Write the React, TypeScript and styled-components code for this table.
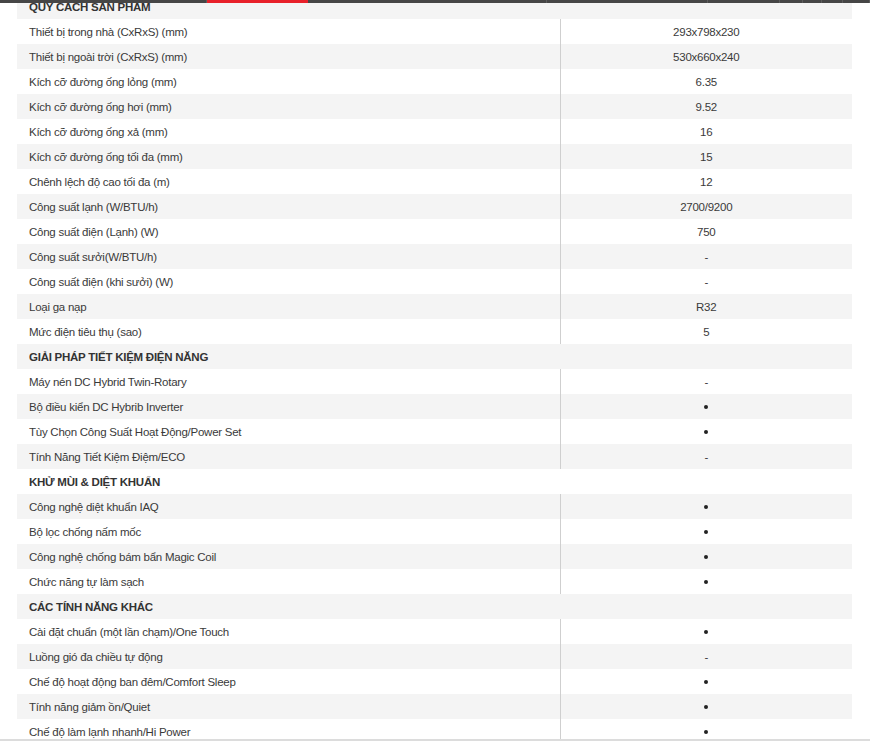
import React from 'react'
import styled, { createGlobalStyle } from 'styled-components'

const GlobalStyle = createGlobalStyle`
  html, body {
    margin: 0;
    padding: 0;
    background: #fff;
  }
  body {
    font-family: 'Liberation Sans', Arial, sans-serif;
    font-size: 11.5px;
    letter-spacing: -0.25px;
    color: #333;
  }
`

const TopNav = styled.div`
  position: fixed;
  top: 0;
  left: 0;
  right: 0;
  height: 3px;
  display: flex;
  background: #464646;
  z-index: 10;
`

const NavTab = styled.div<{ $w: number; $active?: boolean }>`
  width: ${(p) => p.$w}px;
  flex-shrink: 0;
  background: ${(p) => (p.$active ? '#e8202a' : 'transparent')};
  border-right: 1px solid ${(p) => (p.$active ? '#e8202a' : '#5c5c5c')};
  box-sizing: border-box;
`

const BottomEdge = styled.div`
  position: fixed;
  left: 0;
  right: 0;
  bottom: 0;
  height: 2px;
  background: #dcdcdc;
  z-index: 10;
`

const Page = styled.div`
  padding: 0 18px 0 17px;
  margin-top: -6px;
`

const SpecTable = styled.table`
  width: 100%;
  border-collapse: collapse;
  table-layout: fixed;

  tbody tr:nth-child(odd) {
    background: #f4f4f4;
  }
`

const LabelCol = styled.col`
  width: 543px;
`

const Row = styled.tr`
  height: 25px;
`

const HeadCell = styled.td`
  padding: 0 12px;
  font-weight: bold;
  text-transform: uppercase;
  color: #333;
`

const LabelCell = styled.td`
  padding: 0 12px;
  color: #3a3a3a;
  white-space: nowrap;
`

const ValueCell = styled.td`
  border-left: 1px solid #cfcfcf;
  text-align: center;
  color: #3a3a3a;
`

const Dot = styled.span`
  display: inline-block;
  width: 4px;
  height: 4px;
  border-radius: 50%;
  background: #222;
  vertical-align: middle;
`

type Spec = { head: string } | { label: string; value: string }

const specs: Spec[] = [
  { head: 'Quy cách sản phẩm' },
  { label: 'Thiết bị trong nhà (CxRxS) (mm)', value: '293x798x230' },
  { label: 'Thiết bị ngoài trời (CxRxS) (mm)', value: '530x660x240' },
  { label: 'Kích cỡ đường ống lỏng (mm)', value: '6.35' },
  { label: 'Kích cỡ đường ống hơi (mm)', value: '9.52' },
  { label: 'Kích cỡ đường ống xả (mm)', value: '16' },
  { label: 'Kích cỡ đường ống tối đa (mm)', value: '15' },
  { label: 'Chênh lệch độ cao tối đa (m)', value: '12' },
  { label: 'Công suất lạnh (W/BTU/h)', value: '2700/9200' },
  { label: 'Công suất điện (Lạnh) (W)', value: '750' },
  { label: 'Công suất sưởi(W/BTU/h)', value: '-' },
  { label: 'Công suất điện (khi sưởi) (W)', value: '-' },
  { label: 'Loại ga nạp', value: 'R32' },
  { label: 'Mức điện tiêu thụ (sao)', value: '5' },
  { head: 'Giải pháp tiết kiệm điện năng' },
  { label: 'Máy nén DC Hybrid Twin-Rotary', value: '-' },
  { label: 'Bộ điều kiển DC Hybrib Inverter', value: '•' },
  { label: 'Tùy Chọn Công Suất Hoạt Động/Power Set', value: '•' },
  { label: 'Tính Năng Tiết Kiệm Điệm/ECO', value: '-' },
  { head: 'Khử mùi & diệt khuẩn' },
  { label: 'Công nghệ diệt khuẩn IAQ', value: '•' },
  { label: 'Bộ lọc chống nấm mốc', value: '•' },
  { label: 'Công nghệ chống bám bẩn Magic Coil', value: '•' },
  { label: 'Chức năng tự làm sạch', value: '•' },
  { head: 'Các tính năng khác' },
  { label: 'Cài đặt chuẩn (một lần chạm)/One Touch', value: '•' },
  { label: 'Luồng gió đa chiều tự động', value: '-' },
  { label: 'Chế độ hoạt động ban đêm/Comfort Sleep', value: '•' },
  { label: 'Tính năng giảm ồn/Quiet', value: '•' },
  { label: 'Chế độ làm lạnh nhanh/Hi Power', value: '•' },
]

const tabs = [207, 101, 239, 161, 72, 23, 19, 21, 27]

const App: React.FC = () => {
  return (
    <>
      <GlobalStyle />
      <TopNav>
        {tabs.map((w, i) => (
          <NavTab key={i} $w={w} $active={i === 1} />
        ))}
      </TopNav>
      <Page>
        <SpecTable>
          <colgroup>
            <LabelCol />
            <col />
          </colgroup>
          <tbody>
            {specs.map((s, i) =>
              'head' in s ? (
                <Row key={i}>
                  <HeadCell colSpan={2}>{s.head}</HeadCell>
                </Row>
              ) : (
                <Row key={i}>
                  <LabelCell>{s.label}</LabelCell>
                  <ValueCell>{s.value === '•' ? <Dot aria-label="có" /> : s.value}</ValueCell>
                </Row>
              )
            )}
          </tbody>
        </SpecTable>
      </Page>
      <BottomEdge />
    </>
  )
}

export default App
